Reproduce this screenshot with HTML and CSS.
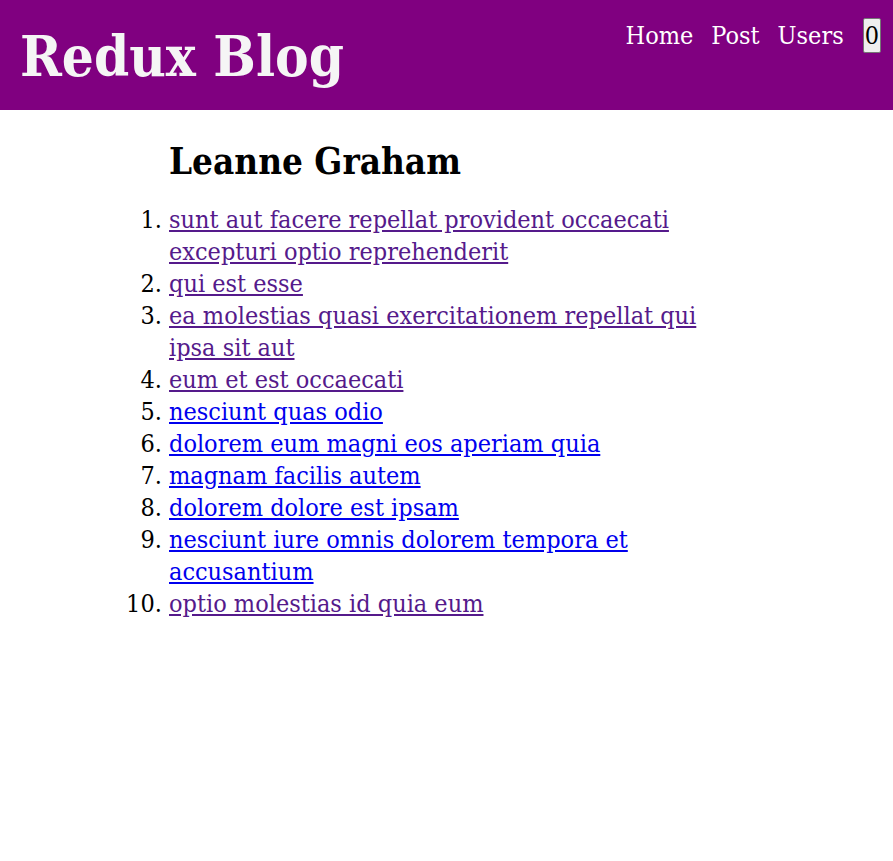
FILE: index.html
```html
<!DOCTYPE html>
<html>
<head>
<meta charset="utf-8">
<link rel="stylesheet" href="styles.css">
</head>
<body>
<header class="header">
  <h1 class="logo">Redux Blog</h1>
  <nav class="nav">
    <ul class="nav-list">
      <li><a href="#" class="nav-link">Home</a></li>
      <li><a href="#" class="nav-link">Post</a></li>
      <li><a href="#" class="nav-link">Users</a></li>
    </ul>
    <button class="count">0</button>
  </nav>
</header>
<main class="main">
  <section class="user">
    <h2 class="user-name">Leanne Graham</h2>
    <ol class="posts">
      <li><a href="#" class="visited">sunt aut facere repellat provident occaecati excepturi optio reprehenderit</a></li>
      <li><a href="#" class="visited">qui est esse</a></li>
      <li><a href="#" class="visited">ea molestias quasi exercitationem repellat qui ipsa sit aut</a></li>
      <li><a href="#" class="visited">eum et est occaecati</a></li>
      <li><a href="#" class="link">nesciunt quas odio</a></li>
      <li><a href="#" class="link">dolorem eum magni eos aperiam quia</a></li>
      <li><a href="#" class="link">magnam facilis autem</a></li>
      <li><a href="#" class="link">dolorem dolore est ipsam</a></li>
      <li><a href="#" class="link">nesciunt iure omnis dolorem tempora et accusantium</a></li>
      <li><a href="#" class="visited">optio molestias id quia eum</a></li>
    </ol>
  </section>
</main>
</body>
</html>
```
FILE: styles.css
```css
* { box-sizing: border-box; }
body {
  margin: 0;
  font-family: "DejaVu Serif", serif;
  font-stretch: condensed;
  font-size: 25px;
  line-height: 32px;
  color: #000;
  background: #fff;
}
.header {
  background: #800080;
  height: 110px;
  display: flex;
  justify-content: space-between;
  align-items: flex-start;
  padding: 0 12px 0 20px;
}
.logo {
  margin: 3px 0 0;
  font-size: 56px;
  line-height: 107px;
  font-weight: bold;
  color: #f5f5f5;
}
.nav {
  display: flex;
  align-items: flex-start;
  margin-top: 18px;
  gap: 19px;
}
.nav-list {
  display: flex;
  gap: 18px;
  list-style: none;
  margin: 2px 0 0;
  padding: 0;
}
.nav-link {
  color: #fff;
  text-decoration: none;
  font-size: 25px;
  line-height: 32px;
}
.count {
  font-family: "DejaVu Serif", serif;
  font-stretch: condensed;
  font-size: 25px;
  line-height: 31px;
  padding: 0 1px;
  height: 35px;
  background: #efefef;
  border: 1px solid #767676;
  border-radius: 2px;
  color: #000;
}
.main {
  display: flex;
  justify-content: center;
}
.user {
  width: 555px;
}
.user-name {
  margin: 30px 0 20px;
  font-size: 36.5px;
  line-height: 44px;
  font-weight: bold;
}
.posts {
  margin: 0;
  padding: 0;
}
.posts a { text-decoration: underline; }
.visited { color: #551a8b; }
.link { color: #0000ee; }
```
